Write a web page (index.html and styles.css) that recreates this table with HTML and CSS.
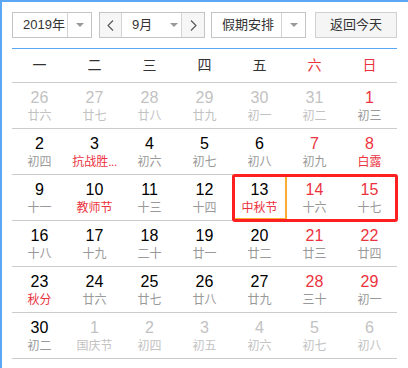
FILE: index.html
```html
<!DOCTYPE html>
<html lang="zh-CN">
<head>
<meta charset="utf-8">
<title>万年历</title>
<link rel="stylesheet" href="styles.css">
</head>
<body>
<div class="cal">
  <div class="toolbar">
    <div class="select year">
      <span class="sel-text">2019年</span>
      <span class="sel-drop"><i class="arrow"></i></span>
    </div>
    <div class="select month">
      <span class="nav prev"><svg width="7" height="11" viewBox="0 0 7 11"><path d="M6 0.5 L1 5.5 L6 10.5" fill="none" stroke="#555" stroke-width="1.1"/></svg></span>
      <span class="sel-text mid">9月<i class="arrow"></i></span>
      <span class="nav next"><svg width="7" height="11" viewBox="0 0 7 11"><path d="M1 0.5 L6 5.5 L1 10.5" fill="none" stroke="#555" stroke-width="1.1"/></svg></span>
    </div>
    <div class="select holiday">
      <span class="sel-text">假期安排</span>
      <span class="sel-drop"><i class="arrow"></i></span>
    </div>
    <button class="today-btn">返回今天</button>
  </div>

  <div class="table">
    <div class="head">
      <span>一</span><span>二</span><span>三</span><span>四</span><span>五</span><span class="we">六</span><span class="we">日</span>
    </div>

    <div class="week">
      <div class="day other"><span class="num">26</span><span class="lunar">廿六</span></div>
      <div class="day other"><span class="num">27</span><span class="lunar">廿七</span></div>
      <div class="day other"><span class="num">28</span><span class="lunar">廿八</span></div>
      <div class="day other"><span class="num">29</span><span class="lunar">廿九</span></div>
      <div class="day other"><span class="num">30</span><span class="lunar">初一</span></div>
      <div class="day other"><span class="num">31</span><span class="lunar">初二</span></div>
      <div class="day weekend"><span class="num">1</span><span class="lunar">初三</span></div>
    </div>

    <div class="week">
      <div class="day"><span class="num">2</span><span class="lunar">初四</span></div>
      <div class="day fest"><span class="num">3</span><span class="lunar">抗战胜<span class="dots">...</span></span></div>
      <div class="day"><span class="num">4</span><span class="lunar">初六</span></div>
      <div class="day"><span class="num">5</span><span class="lunar">初七</span></div>
      <div class="day"><span class="num">6</span><span class="lunar">初八</span></div>
      <div class="day weekend"><span class="num">7</span><span class="lunar">初九</span></div>
      <div class="day weekend fest"><span class="num">8</span><span class="lunar">白露</span></div>
    </div>

    <div class="week">
      <div class="day"><span class="num">9</span><span class="lunar">十一</span></div>
      <div class="day fest"><span class="num">10</span><span class="lunar">教师节</span></div>
      <div class="day"><span class="num">11</span><span class="lunar">十三</span></div>
      <div class="day"><span class="num">12</span><span class="lunar">十四</span></div>
      <div class="day fest sel"><span class="num">13</span><span class="lunar">中秋节</span></div>
      <div class="day weekend"><span class="num">14</span><span class="lunar">十六</span></div>
      <div class="day weekend"><span class="num">15</span><span class="lunar">十七</span></div>
    </div>

    <div class="week">
      <div class="day"><span class="num">16</span><span class="lunar">十八</span></div>
      <div class="day"><span class="num">17</span><span class="lunar">十九</span></div>
      <div class="day"><span class="num">18</span><span class="lunar">二十</span></div>
      <div class="day"><span class="num">19</span><span class="lunar">廿一</span></div>
      <div class="day"><span class="num">20</span><span class="lunar">廿二</span></div>
      <div class="day weekend"><span class="num">21</span><span class="lunar">廿三</span></div>
      <div class="day weekend"><span class="num">22</span><span class="lunar">廿四</span></div>
    </div>

    <div class="week">
      <div class="day fest"><span class="num">23</span><span class="lunar">秋分</span></div>
      <div class="day"><span class="num">24</span><span class="lunar">廿六</span></div>
      <div class="day"><span class="num">25</span><span class="lunar">廿七</span></div>
      <div class="day"><span class="num">26</span><span class="lunar">廿八</span></div>
      <div class="day"><span class="num">27</span><span class="lunar">廿九</span></div>
      <div class="day weekend"><span class="num">28</span><span class="lunar">三十</span></div>
      <div class="day weekend"><span class="num">29</span><span class="lunar">初一</span></div>
    </div>

    <div class="week">
      <div class="day"><span class="num">30</span><span class="lunar">初二</span></div>
      <div class="day other"><span class="num">1</span><span class="lunar">国庆节</span></div>
      <div class="day other"><span class="num">2</span><span class="lunar">初四</span></div>
      <div class="day other"><span class="num">3</span><span class="lunar">初五</span></div>
      <div class="day other"><span class="num">4</span><span class="lunar">初六</span></div>
      <div class="day other"><span class="num">5</span><span class="lunar">初七</span></div>
      <div class="day other"><span class="num">6</span><span class="lunar">初八</span></div>
    </div>

    <div class="mark"></div>
  </div>
</div>
</body>
</html>
```

FILE: styles.css
```css
html, body {
  margin: 0;
  padding: 0;
  overflow: hidden;
  background: #fff;
}

body {
  font-family: "Liberation Sans", "Noto Sans CJK SC", sans-serif;
  color: #333;
}

.cal {
  box-sizing: border-box;
  height: 368px;
  border-top: 2px solid #5aa8f5;
  border-left: 2px solid #5aa8f5;
  padding: 10px 0 0 10px;
}

/* toolbar */
.toolbar {
  display: flex;
  width: 385px;
  height: 26px;
}

.select {
  box-sizing: border-box;
  display: flex;
  height: 26px;
  border: 1px solid #c4c4c4;
  background: #fff;
  font-size: 13px;
  line-height: 24px;
  color: #333;
}

.sel-text {
  box-sizing: border-box;
  padding-left: 10px;
  white-space: nowrap;
}

.sel-drop {
  box-sizing: border-box;
  width: 24px;
  border-left: 1px solid #d4d4d4;
  display: flex;
  align-items: center;
  justify-content: center;
}

.arrow {
  display: inline-block;
  width: 0;
  height: 0;
  border-left: 4px solid transparent;
  border-right: 4px solid transparent;
  border-top: 4px solid #999;
}

.year {
  width: 80px;
}

.year .sel-text {
  width: 54px;
}

.month {
  width: 106px;
  margin-left: 7px;
}

.nav {
  box-sizing: border-box;
  width: 22px;
  display: flex;
  align-items: center;
  justify-content: center;
  background: #f6f6f6;
}

.prev {
  border-right: 1px solid #d4d4d4;
}

.next {
  width: 23px;
  border-left: 1px solid #d4d4d4;
}

.mid {
  width: 59px;
  display: flex;
  align-items: center;
}

.mid .arrow {
  margin-left: 18px;
}

.holiday {
  width: 95px;
  margin-left: 6px;
}

.holiday .sel-text {
  width: 69px;
}

.today-btn {
  box-sizing: border-box;
  width: 82px;
  height: 26px;
  margin: 0 0 0 9px;
  padding: 0;
  border: 1px solid #d0d0d0;
  border-radius: 0;
  background: #f5f5f5;
  font-family: "Liberation Sans", "Noto Sans CJK SC", sans-serif;
  font-size: 13px;
  line-height: 24px;
  color: #333;
}

/* table */
.table {
  position: relative;
  width: 385px;
  margin-top: 10px;
  border-top: 1px solid #5aa8f5;
}

.head {
  display: grid;
  grid-template-columns: repeat(7, 55px);
  height: 33px;
  line-height: 33px;
  border-bottom: 1px solid #cccccc;
  font-size: 14px;
  color: #333;
  text-align: center;
}

.head .we {
  color: #eb3340;
}

.week {
  display: grid;
  grid-template-columns: repeat(7, 55px);
  border-bottom: 1px solid #cccccc;
}

.week:last-of-type {
  border-bottom: none;
}

.day {
  box-sizing: border-box;
  height: 45px;
  padding-top: 5px;
  text-align: center;
}

.num {
  display: block;
  font-size: 16px;
  line-height: 20px;
  color: #000;
}

.lunar {
  display: block;
  font-size: 12px;
  line-height: 16px;
  color: #999;
  white-space: nowrap;
}

.dots {
  letter-spacing: -0.5px;
}

.weekend .num {
  color: #eb3340;
}

.fest .lunar {
  color: #eb3340;
}

.other .num,
.other .lunar {
  color: #c2c2c2;
}

.sel {
  box-shadow: inset 0 0 0 2px #fbad33;
}

.mark {
  position: absolute;
  left: 220px;
  top: 125px;
  box-sizing: border-box;
  width: 166px;
  height: 48px;
  border: 3px solid #fe2020;
  border-radius: 3px;
}
```
